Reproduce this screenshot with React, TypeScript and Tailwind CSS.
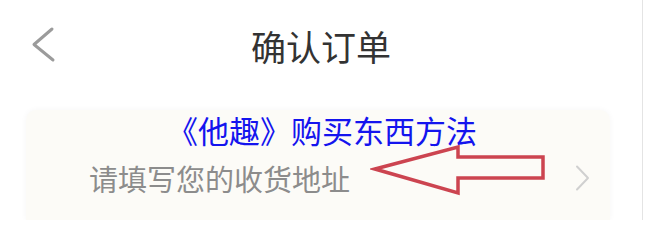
import React from 'react';

const cjk = { fontFamily: '"Noto Sans CJK SC", "Noto Sans", sans-serif' };

function BackIcon() {
  return (
    <svg width="26" height="40" viewBox="0 0 26 40" fill="none">
      <polyline points="21,4 3,19.5 22,35" stroke="#9b9b9b" strokeWidth="3" strokeLinecap="round" strokeLinejoin="round" />
    </svg>
  );
}

function NextIcon() {
  return (
    <svg width="16" height="28" viewBox="0 0 16 28" fill="none">
      <polyline points="3,2.5 14,14 3,25.5" stroke="#d0d0d0" strokeWidth="2" strokeLinecap="round" strokeLinejoin="round" />
    </svg>
  );
}

// red hint arrow drawn on top of the screenshot
function HintArrow() {
  return (
    <svg className="absolute left-[370px] top-[142px]" width="180" height="56" viewBox="0 0 180 56" fill="none">
      <polygon
        points="5,27 88,5 88,15 173,15 173,36 88,36 88,51"
        stroke="#cc4450"
        strokeWidth="3.5"
        strokeLinejoin="miter"
      />
    </svg>
  );
}

export default function App() {
  return (
    <div className="relative w-[650px] h-[220px] overflow-hidden bg-white flex" style={cjk}>
      <div className="w-[643px] h-full border-r border-[#e4e4e4] flex flex-col">
        <div className="h-[90px] grid grid-cols-[1fr_auto_1fr] items-center">
          <div className="pl-[31px] flex items-center">
            <BackIcon />
          </div>
          <h1 className="text-[35px] leading-none text-[#333333] font-normal">确认订单</h1>
          <div />
        </div>

        <div className="mt-[20px] ml-[26px] mr-[32px] flex-1 rounded-t-[10px] bg-[#fcfbf7] shadow-[0_0_6px_rgba(0,0,0,0.04)] pt-[50px] pl-[63px] pr-[20px]">
          <div className="flex items-center justify-between h-[36px]">
            <span className="text-[29px] leading-[36px] text-[#8c8c8c]">请填写您的收货地址</span>
            <NextIcon />
          </div>
        </div>
      </div>

      {/* watermark caption */}
      <div className="absolute left-[167px] top-[114px] text-[31px] leading-none text-[#1414ee] whitespace-nowrap">
        《他趣》购买东西方法
      </div>
      <HintArrow />
    </div>
  );
}
